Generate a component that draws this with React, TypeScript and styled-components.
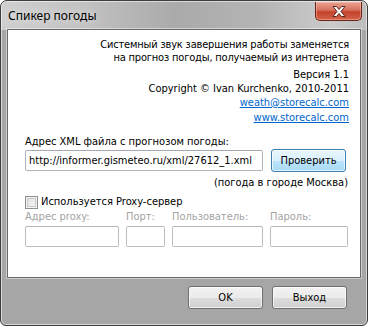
import styled, { createGlobalStyle } from 'styled-components';

const GlobalStyle = createGlobalStyle`
  html, body {
    margin: 0;
    padding: 0;
    background: #ffffff;
  }
  #root {
    width: 368px;
    height: 326px;
  }
`;

const StyledWindow = styled.div`
  box-sizing: border-box;
  width: 368px;
  height: 326px;
  display: flex;
  flex-direction: column;
  border: 1px solid #3d3d3d;
  border-radius: 7px 7px 6px 6px;
  box-shadow: inset 0 0 0 1px rgba(255, 255, 255, 0.55);
  background: linear-gradient(
      90deg,
      #cfcfcf 0%,
      #c2c2c2 22%,
      #aaaaaa 48%,
      #b4b4b4 70%,
      #cbcbcb 90%,
      #bdbdbd 100%
    )
    top / 100% 29px no-repeat,
    #a6a6a6;
  overflow: hidden;
  font-family: 'DejaVu Sans Condensed', 'DejaVu Sans', sans-serif;
  font-size: 11px;
  color: #000;
`;

const StyledTitleBar = styled.div`
  height: 28px;
  display: flex;
  align-items: flex-start;
  justify-content: space-between;
  padding: 0 5px 0 7px;
`;

const StyledTitle = styled.span`
  font-family: 'Noto Sans', sans-serif;
  font-size: 12px;
  line-height: 30px;
  color: #000;
  text-shadow: 0 0 8px rgba(255, 255, 255, 0.9);
`;

const StyledClose = styled.div`
  box-sizing: border-box;
  width: 47px;
  height: 19px;
  margin-top: 1px;
  border: 1px solid #6b2418;
  border-top: none;
  border-radius: 0 0 5px 5px;
  background: linear-gradient(#e9a493 0%, #d6715c 45%, #c4422c 55%, #d3634a 100%);
  box-shadow: inset 0 0 0 1px rgba(255, 200, 190, 0.45);
  display: flex;
  align-items: center;
  justify-content: center;
`;

const StyledClient = styled.div`
  box-sizing: border-box;
  height: 249px;
  margin: 0 6px 0 6px;
  border: 1px solid #6a6a6a;
  box-shadow: 0 0 0 1px rgba(255, 255, 255, 0.45);
  background: #fff;
  padding: 8px 11px 0 17px;
  display: flex;
  flex-direction: column;
`;

const StyledInfo = styled.div<{ gap?: number; tight?: boolean }>`
  text-align: right;
  line-height: 13px;
  margin-top: ${(p) => p.gap || 0}px;
  letter-spacing: ${(p) => (p.tight ? '-0.18px' : '0')};
`;

const StyledInfoLine = styled.div<{ tall?: boolean }>`
  line-height: ${(p) => (p.tall ? 15 : 14)}px;
`;

const StyledLink = styled.a`
  color: #0066cc;
  text-decoration: underline;
`;

const StyledLabel = styled.div<{ disabled?: boolean; gap?: number }>`
  line-height: 14px;
  color: ${(p) => (p.disabled ? '#a3a3a3' : '#000')};
  margin-top: ${(p) => p.gap || 0}px;
  white-space: nowrap;
`;

const StyledUrlRow = styled.div`
  display: flex;
  align-items: center;
  gap: 8px;
`;

const StyledInput = styled.div<{ disabled?: boolean; w?: number }>`
  box-sizing: border-box;
  width: ${(p) => (p.w ? p.w + 'px' : '100%')};
  height: 21px;
  border: 1px solid ${(p) => (p.disabled ? '#bfbfbf' : '#b0b3ba')};
  border-top-color: ${(p) => (p.disabled ? '#b5b5b5' : '#a5a8b0')};
  border-radius: 2px;
  background: #fff;
  padding: 0 3px;
  line-height: 19px;
  white-space: nowrap;
  overflow: hidden;
`;

const StyledButton = styled.div<{ primary?: boolean }>`
  box-sizing: border-box;
  width: 75px;
  height: 23px;
  border: 1px solid ${(p) => (p.primary ? '#3c7fb1' : '#707070')};
  border-radius: 3px;
  background: ${(p) =>
    p.primary
      ? 'linear-gradient(#eaf6fd 0%, #d9f0fc 50%, #bee6fd 51%, #a7d9f5 100%)'
      : 'linear-gradient(#f2f2f2 0%, #ebebeb 50%, #dddddd 51%, #cfcfcf 100%)'};
  box-shadow: inset 0 0 0 1px rgba(255, 255, 255, 0.7);
  display: flex;
  align-items: center;
  justify-content: center;
  font-family: 'DejaVu Sans Condensed', 'DejaVu Sans', sans-serif;
  font-size: 11px;
  color: #000;
`;

const StyledNote = styled.div`
  text-align: right;
  line-height: 14px;
  margin-top: 4px;
  padding-right: 1px;
`;

const StyledCheckRow = styled.div`
  display: flex;
  align-items: center;
  gap: 3px;
  margin-top: 5px;
  line-height: 14px;
`;

const StyledCheckbox = styled.span`
  box-sizing: border-box;
  width: 13px;
  height: 13px;
  border: 1px solid #8e8f8f;
  background: linear-gradient(135deg, #dcdcdc, #fbfbfb);
  box-shadow: inset 0 0 0 1px #f4f4f4, inset 0 0 0 2px #c9c9c9;
`;

const StyledProxyGrid = styled.div`
  display: grid;
  grid-template-columns: 94px 39px 91px 78px;
  column-gap: 7px;
  row-gap: 2px;
  margin-top: 1px;
`;

const StyledFooter = styled.div`
  flex: 1;
  display: flex;
  justify-content: flex-end;
  align-items: flex-start;
  gap: 9px;
  padding: 8px 20px 0 0;
`;

function CloseGlyph() {
  return (
    <svg width="14" height="11" viewBox="0 0 14 11">
      <path
        d="M1 0.5h3.5L7 3.5l2.5-3h3.5L9 5.5l4 5H9.5L7 7.5l-2.5 3H1l4-5z"
        fill="#ffffff"
        stroke="#5a2a22"
        strokeWidth="1"
        strokeLinejoin="round"
      />
    </svg>
  );
}

export default function App() {
  return (
    <>
      <GlobalStyle />
      <StyledWindow>
        <StyledTitleBar>
          <StyledTitle>Спикер погоды</StyledTitle>
          <StyledClose>
            <CloseGlyph />
          </StyledClose>
        </StyledTitleBar>
        <StyledClient>
          <StyledInfo tight>
            Системный звук завершения работы заменяется
            <br />
            на прогноз погоды, получаемый из интернета
          </StyledInfo>
          <StyledInfo gap={4}>
            <StyledInfoLine>Версия 1.1</StyledInfoLine>
            <StyledInfoLine>Copyright © Ivan Kurchenko, 2010-2011</StyledInfoLine>
            <StyledInfoLine>
              <StyledLink>weath@storecalc.com</StyledLink>
            </StyledInfoLine>
            <StyledInfoLine tall>
              <StyledLink>www.storecalc.com</StyledLink>
            </StyledInfoLine>
          </StyledInfo>
          <StyledLabel gap={10}>Адрес XML файла с прогнозом погоды:</StyledLabel>
          <StyledUrlRow>
            <StyledInput w={238}>http://informer.gismeteo.ru/xml/27612_1.xml</StyledInput>
            <StyledButton primary>Проверить</StyledButton>
          </StyledUrlRow>
          <StyledNote>(погода в городе Москва)</StyledNote>
          <StyledCheckRow>
            <StyledCheckbox />
            <span>Используется Proxy-сервер</span>
          </StyledCheckRow>
          <StyledProxyGrid>
            <StyledLabel disabled>Адрес proxy:</StyledLabel>
            <StyledLabel disabled>Порт:</StyledLabel>
            <StyledLabel disabled>Пользователь:</StyledLabel>
            <StyledLabel disabled>Пароль:</StyledLabel>
            <StyledInput disabled />
            <StyledInput disabled />
            <StyledInput disabled />
            <StyledInput disabled />
          </StyledProxyGrid>
        </StyledClient>
        <StyledFooter>
          <StyledButton>OK</StyledButton>
          <StyledButton>Выход</StyledButton>
        </StyledFooter>
      </StyledWindow>
    </>
  );
}
